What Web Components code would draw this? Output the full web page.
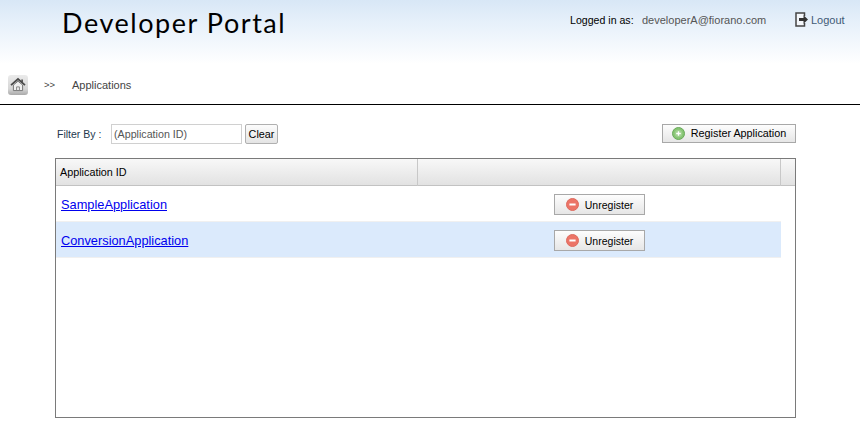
<!DOCTYPE html>
<html>
<head>
<meta charset="utf-8">
<title>Developer Portal</title>
<style>
  html, body { margin: 0; background: #fff; }
  body { font-family: "Liberation Sans", Arial, sans-serif; width: 860px; height: 433px; overflow: hidden; }
</style>
</head>
<body>
<portal-page></portal-page>

<script>
const ICONS = {
  home: `<svg width="20" height="20" viewBox="0 0 20 20">
    <defs><linearGradient id="hb" x1="0" y1="0" x2="0" y2="1"><stop offset="0" stop-color="#ebebeb"/><stop offset="0.7" stop-color="#d6d6d6"/><stop offset="1" stop-color="#a9a9a9"/></linearGradient></defs>
    <rect x="0" y="0" width="20" height="20" rx="3" fill="url(#hb)"/>
    <path d="M3 10.2 10 4l7 6.2" fill="none" stroke="#4a4a4a" stroke-width="1.7"/>
    <path d="M13.3 4.4h1.6v3h-1.6z" fill="#4a4a4a"/>
    <path d="M5.4 10v5.6h9.2V10L10 6.2z" fill="#efefef" stroke="#777" stroke-width="1"/>
    <path d="M8.6 15.5v-3.6h2.8v3.6" fill="none" stroke="#888" stroke-width="1"/>
  </svg>`,
  logout: `<svg width="14" height="15" viewBox="0 0 14 15">
    <path d="M9.5 4V1H1v13h8.5v-3" fill="#f4f7fb" stroke="#444" stroke-width="1.5"/>
    <path d="M4 6h4.5V3.3L13 7.5l-4.5 4.2V9H4z" fill="#333"/>
  </svg>`,
  add: `<svg width="13" height="13" viewBox="0 0 13 13">
    <circle cx="6.5" cy="6.5" r="6" fill="#86c573" stroke="#69a95a" stroke-width="1"/>
    <circle cx="6.5" cy="6.5" r="3.8" fill="#9ed08e"/>
    <path d="M6.5 4.2v4.6M4.2 6.5h4.6" stroke="#fff" stroke-width="1.4"/>
  </svg>`,
  remove: `<svg width="13" height="13" viewBox="0 0 13 13">
    <circle cx="6.5" cy="6.5" r="6" fill="#ec7467" stroke="#dd6a5e" stroke-width="1"/>
    <path d="M3.4 6.5h6.2" stroke="#fff" stroke-width="2"/>
  </svg>`
};

class PortalHeader extends HTMLElement {
  constructor() {
    super();
    this.attachShadow({ mode: 'open' });
    this.shadowRoot.innerHTML = `
      <style>
        :host {
          display: flex;
          box-sizing: border-box;
          height: 68px;
          padding-left: 62px;
          background: linear-gradient(#d8e7f6 0, #e6f0fa 22px, #fff 64px);
        }
        h1 {
          margin: 7px 0 0 0;
          font: normal 27px/32px Lato, "Open Sans", sans-serif;
          letter-spacing: 1.55px;
          color: #000;
          width: 508px;
          white-space: nowrap;
        }
        .who { margin-top: 14px; font-size: 10.6px; line-height: 12px; color: #000; width: 72px; white-space: nowrap; }
        .mail { margin-top: 14px; font-size: 11px; line-height: 13px; color: #555; width: 153px; white-space: nowrap; }
        .out { margin-top: 12px; display: flex; gap: 2px; font-size: 11px; color: #3f5a76; line-height: 16px; }
        .out svg { display: block; }
      </style>
      <h1>Developer Portal</h1>
      <div class="who">Logged in as:</div>
      <div class="mail">developerA@fiorano.com</div>
      <div class="out">${ICONS.logout}<span>Logout</span></div>
    `;
  }
}

class PortalCrumbs extends HTMLElement {
  constructor() {
    super();
    this.attachShadow({ mode: 'open' });
    this.shadowRoot.innerHTML = `
      <style>
        :host {
          display: flex;
          align-items: center;
          box-sizing: border-box;
          height: 37px;
          padding: 0 0 3px 8px;
          border-bottom: 1px solid #000;
          font-size: 11px;
          color: #444;
        }
        svg { display: block; margin-right: 16px; }
        .sep { width: 28px; font-size: 9.5px; }
      </style>
      ${ICONS.home}
      <span class="sep">&gt;&gt;</span>
      <span><slot></slot></span>
    `;
  }
}

class PortalButton extends HTMLElement {
  constructor() {
    super();
    this.attachShadow({ mode: 'open' });
    const icon = ICONS[this.getAttribute('icon')] || '';
    this.shadowRoot.innerHTML = `
      <style>
        :host {
          display: flex;
          align-items: center;
          justify-content: center;
          gap: 6px;
          box-sizing: border-box;
          border: 1px solid #a8a8a8;
          background: linear-gradient(#fdfdfd, #e6e6e6);
          font-size: 10.5px;
          color: #000;
          white-space: nowrap;
        }
        svg { display: block; }
      </style>
      ${icon}<span><slot></slot></span>
    `;
  }
}

class FilterBar extends HTMLElement {
  constructor() {
    super();
    this.attachShadow({ mode: 'open' });
    this.shadowRoot.innerHTML = `
      <style>
        :host {
          display: flex;
          align-items: center;
          height: 20px;
          margin: 19px 64px 14px 57px;
          font-size: 10.5px;
          color: #22384e;
        }
        .label { width: 54px; white-space: nowrap; }
        .field {
          box-sizing: border-box;
          width: 131px;
          height: 20px;
          padding: 0 2px;
          border: 1px solid #d0d0d0;
          font-size: 10.7px;
          line-height: 18px;
          color: #555;
        }
        .clear {
          box-sizing: border-box;
          width: 33px;
          height: 20px;
          margin-left: 3px;
          border: 1px solid #b0b0b0;
          border-radius: 2px;
          background: linear-gradient(#fcfcfc, #e4e4e4);
          text-align: center;
          font-size: 10.8px;
          line-height: 18px;
          color: #000;
        }
        .grow { flex: 1; }
        .register { width: 134px; height: 19px; margin-top: -2px; font-size: 10.8px; }
      </style>
      <span class="label">Filter By :</span>
      <div class="field">(Application ID)</div>
      <div class="clear">Clear</div>
      <div class="grow"></div>
      <portal-button class="register" icon="add">Register Application</portal-button>
    `;
  }
}

class AppRow extends HTMLElement {
  constructor() {
    super();
    this.attachShadow({ mode: 'open' });
    this.shadowRoot.innerHTML = `
      <style>
        :host {
          display: flex;
          align-items: center;
          box-sizing: border-box;
          width: 725px;
          height: 36px;
          padding-left: 5px;
          border-bottom: 1px solid #f0f0f0;
        }
        :host([alt]) { background: #dbeafc; }
        a { width: 493px; margin-top: 2px; font-size: 12.8px; color: #0000ee; text-decoration: underline; }
        portal-button { width: 91px; height: 21px; margin-top: 2px; }
      </style>
      <a><slot></slot></a>
      <portal-button icon="remove">Unregister</portal-button>
    `;
  }
}

class AppGrid extends HTMLElement {
  constructor() {
    super();
    this.attachShadow({ mode: 'open' });
    this.shadowRoot.innerHTML = `
      <style>
        :host {
          display: block;
          box-sizing: border-box;
          width: 741px;
          height: 260px;
          margin-left: 55px;
          border: 1px solid #7a7a7a;
        }
        .head {
          display: grid;
          grid-template-columns: 362px 363px 1fr;
          height: 27px;
          border-bottom: 1px solid #c2c2c2;
          box-sizing: border-box;
          background: linear-gradient(#f8f8f8, #e2e2e2);
          font-size: 10.8px;
          color: #000;
        }
        .head div { border-right: 1px solid #c8c8c8; line-height: 27px; padding-left: 4px; box-sizing: border-box; white-space: nowrap; }
        .head div:last-child { border-right: 0; }
      </style>
      <div class="head"><div>Application ID</div><div></div><div></div></div>
      <slot></slot>
    `;
  }
}

class PortalPage extends HTMLElement {
  constructor() {
    super();
    this.attachShadow({ mode: 'open' });
    this.shadowRoot.innerHTML = `
      <style>
        :host { display: block; }
      </style>
      <portal-header></portal-header>
      <portal-crumbs>Applications</portal-crumbs>
      <filter-bar></filter-bar>
      <app-grid>
        <app-row>SampleApplication</app-row>
        <app-row alt>ConversionApplication</app-row>
      </app-grid>
    `;
  }
}

customElements.define('portal-header', PortalHeader);
customElements.define('portal-crumbs', PortalCrumbs);
customElements.define('portal-button', PortalButton);
customElements.define('filter-bar', FilterBar);
customElements.define('app-row', AppRow);
customElements.define('app-grid', AppGrid);
customElements.define('portal-page', PortalPage);
</script>
</body>
</html>
